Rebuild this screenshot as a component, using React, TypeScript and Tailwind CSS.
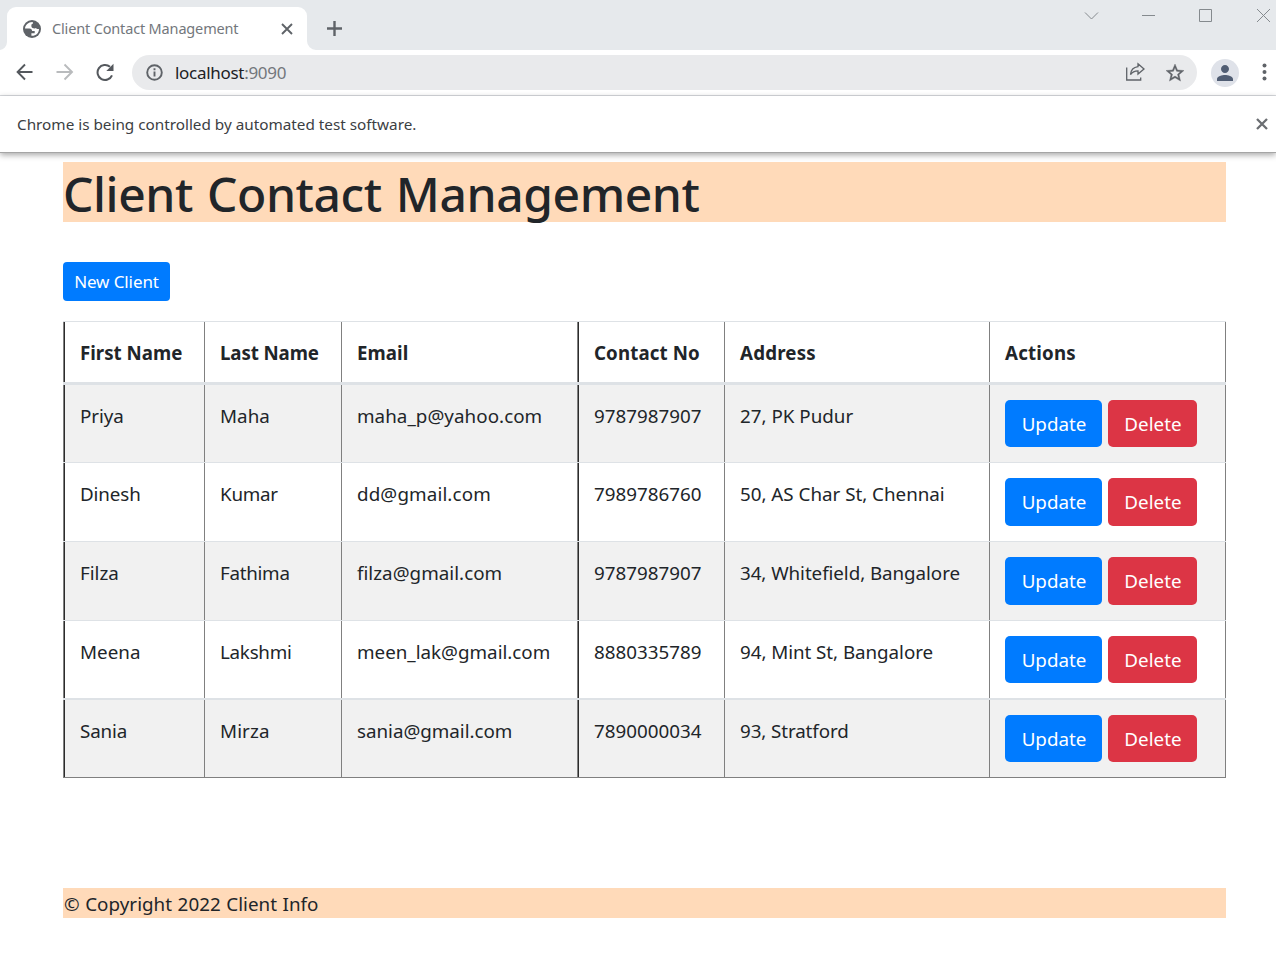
import type { ReactNode } from "react";

const columns = [
  { label: "First Name", track: "tracking-[0px]" },
  { label: "Last Name", track: "tracking-[-0.1px]" },
  { label: "Email", track: "tracking-[0.08px]" },
  { label: "Contact No", track: "tracking-[0.12px]" },
  { label: "Address", track: "tracking-[0.2px]" },
  { label: "Actions", track: "tracking-[0.2px]" },
];

type Cell = [text: string, track: string];

const clients: { row: string; button: string; cells: Cell[] }[] = [
  {
    row: "h-[78px] border-b bg-[#f1f1f1]",
    button: "h-[47px]",
    cells: [
      ["Priya", "tracking-[-0.1px]"],
      ["Maha", "tracking-[0.05px]"],
      ["maha_p@yahoo.com", "tracking-[0.05px]"],
      ["9787987907", "tracking-[0.02px]"],
      ["27, PK Pudur", "tracking-[0px]"],
    ],
  },
  {
    row: "h-[79px] border-b bg-white",
    button: "h-[48px]",
    cells: [
      ["Dinesh", "tracking-[-0.12px]"],
      ["Kumar", "tracking-[-0.25px]"],
      ["dd@gmail.com", "tracking-[0.13px]"],
      ["7989786760", "tracking-[0.02px]"],
      ["50, AS Char St, Chennai", "tracking-[-0.01px]"],
    ],
  },
  {
    row: "h-[79px] border-b bg-[#f1f1f1]",
    button: "h-[48px]",
    cells: [
      ["Filza", "tracking-[-0.02px]"],
      ["Fathima", "tracking-[-0.28px]"],
      ["filza@gmail.com", "tracking-[0.03px]"],
      ["9787987907", "tracking-[0.02px]"],
      ["34, Whitefield, Bangalore", "tracking-[-0.06px]"],
    ],
  },
  {
    row: "h-[79px] border-b-2 bg-white",
    button: "h-[47px]",
    cells: [
      ["Meena", "tracking-[0.03px]"],
      ["Lakshmi", "tracking-[-0.26px]"],
      ["meen_lak@gmail.com", "tracking-[0px]"],
      ["8880335789", "tracking-[0.02px]"],
      ["94, Mint St, Bangalore", "tracking-[-0.05px]"],
    ],
  },
  {
    row: "h-[77px] bg-[#f1f1f1]",
    button: "h-[47px]",
    cells: [
      ["Sania", "tracking-[-0.12px]"],
      ["Mirza", "tracking-[0.12px]"],
      ["sania@gmail.com", "tracking-[-0.02px]"],
      ["7890000034", "tracking-[0.02px]"],
      ["93, Stratford", "tracking-[-0.1px]"],
    ],
  },
];

const cellBorders = [
  "border-l border-r pl-4 shadow-[inset_1px_0_0_#2c2c2c]",
  "border-r pl-[15px]",
  "pl-[15px] shadow-[inset_-1px_0_0_#2c2c2c,inset_-2px_0_0_#808080]",
  "border-r pl-[15px]",
  "border-r pl-[15px]",
  "border-r pl-[15px]",
];

function Row({ className, children }: { className: string; children: ReactNode }) {
  return (
    <div
      className={`grid grid-cols-[142px_137px_237px_146px_265px_236px] border-[#dee2e6] ${className}`}
    >
      {children}
    </div>
  );
}

function TableCell({ index, className = "", children }: { index: number; className?: string; children: ReactNode }) {
  return (
    <div className={`whitespace-nowrap border-[#808080] pt-[15px] ${cellBorders[index]} ${className}`}>
      {children}
    </div>
  );
}

function TabStrip() {
  return (
    <div className="flex h-[50px] bg-[#e6e9ec] pl-[7px] pt-[7px]">
      <div className="relative flex h-[43px] w-[300px] items-center rounded-t-[9px] bg-white pl-4">
        <svg className="absolute -left-[8px] bottom-0 size-2" viewBox="0 0 8 8">
          <path d="M8 0v8H0a8 8 0 0 0 8-8z" fill="#fff" />
        </svg>
        <svg className="absolute -right-[9px] bottom-0 size-[9px]" viewBox="0 0 9 9">
          <path d="M0 0v9h9a9 9 0 0 1-9-9z" fill="#fff" />
        </svg>
        <svg className="size-[18px]" viewBox="0 0 18 18">
          <circle cx="9" cy="9" r="9" fill="#5f6368" />
          <path
            d="M9.800 2C5.500 1.800 2.200 5 2 8.600h4.500c1.600 0 2.600 1 2.600 2.400h2.600v2.200H8.400v2.600c4 .500 7.600-2.600 7.600-6.800h-1.500c-.7 0-1.100-.3-1.500-.9-.8 1-4.600.400-4.600-1.500V5.200c0-.900.500-1.300 1.400-1.400z"
            fill="#fff"
          />
        </svg>
        <span className="ml-[11px] w-[230px] whitespace-nowrap text-[14.5px] tracking-[-0.16px] text-[#73777c]">
          Client Contact Management
        </span>
        <svg className="absolute left-[274px] top-[16px] size-3" viewBox="0 0 12 12" stroke="#5f6368" strokeWidth="1.9">
          <path d="M1 1l10 10M11 1L1 11" />
        </svg>
      </div>
      <svg className="ml-[19px] mt-[13px] size-4" viewBox="0 0 16 16" stroke="#5f6368" strokeWidth="2.4">
        <path d="M8.500 1v15M1 8.500h15" />
      </svg>
      <div className="ml-auto flex h-[17px] items-center text-[#858a8e]">
        <svg className="mb-px h-[13px] w-[185px] overflow-visible" viewBox="0 0 185 13" fill="none" stroke="currentColor">
          <path d="M0 3.500l6.500 6.500L13 3.500M57 6.500h13M114.500.5h12v12h-12zM172 0l13 13M185 0l-13 13" />
        </svg>
        <div className="w-[6px]" />
      </div>
    </div>
  );
}

function Toolbar() {
  return (
    <div className="flex h-[46px] items-center border-b border-[#d9dbdf] bg-white">
      <svg className="mb-[2px] ml-[15px] h-[18px] w-[100px]" viewBox="0 0 100 18" fill="none" strokeWidth="1.9">
        <path d="M17.500 9H3M10 1.500L2.600 9L10 16.500" stroke="#54585d" />
        <path d="M41.500 9h15M49.500 1.500L57 9l-7.500 7.500" stroke="#b9bbbd" />
        <path d="M97 12.300A7.500 7.500 0 1 1 95 3.800" stroke="#54585d" strokeWidth="2" />
        <path d="M98.500.8v7.200h-7.200z" fill="#54585d" />
      </svg>
      <div className="ml-[17px] flex h-[35px] w-[1065px] items-center rounded-full bg-[#e9eaec] pl-[14px]">
        <svg className="size-[17px]" viewBox="0 0 17 17" fill="none" stroke="#5f6368" strokeWidth="1.9">
          <circle cx="8.500" cy="8.500" r="7.300" />
          <path d="M8.500 7.500v5M8.500 4.300v1.900" />
        </svg>
        <span className="ml-[12px] text-[17px] tracking-[-0.3px] text-[#202124]">
          localhost<span className="text-[#73777c]">:9090</span>
        </span>
        <svg className="mb-px ml-auto mr-px h-[20px] w-[20px]" viewBox="0 0 20 20" fill="none" stroke="#5f6368" strokeWidth="1.3">
          <path d="M1.700 5.500v12.500h14v-2.500" />
          <path d="M13 1.800l6 5.200-6 5v-3.200c-3.400 0-5.700 1-7.500 3.800.4-4.600 2.900-7.300 7.500-7.900z" />
        </svg>
        <svg className="ml-[20px] mr-[13px] size-[18px]" viewBox="2 2 20 20" fill="#5f6368" stroke="#5f6368" strokeWidth=".4">
          <path d="M22 9.240l-7.190-.620L12 2 9.190 8.630 2 9.240l5.460 4.730L5.820 21 12 17.270 18.180 21l-1.630-7.030L22 9.240zM12 15.400l-3.760 2.270 1-4.280-3.320-2.880 4.380-.380L12 6.100l1.710 4.040 4.380.380-3.320 2.880 1 4.280L12 15.400z" />
        </svg>
      </div>
      <div className="ml-[14px] flex size-7 items-center justify-center rounded-full bg-[#dfe2e9]">
        <svg className="size-4" viewBox="4 4 16 16" fill="#505d73">
          <path d="M12 12c2.210 0 4-1.790 4-4s-1.790-4-4-4-4 1.790-4 4 1.790 4 4 4zm0 2c-2.670 0-8 1.340-8 4v2h16v-2c0-2.660-5.330-4-8-4z" />
        </svg>
      </div>
      <svg className="mb-px ml-[23px] h-[18px] w-[5px]" viewBox="0 0 5 18" fill="#5f6368">
        <circle cx="2.500" cy="2.600" r="2" />
        <circle cx="2.500" cy="9" r="2" />
        <circle cx="2.500" cy="15.400" r="2" />
      </svg>
    </div>
  );
}

export default function App() {
  return (
    <div className="flex h-[961px] w-[1276px] flex-col overflow-hidden bg-white font-['Noto_Sans','Open_Sans',sans-serif] text-[#212529]">
      <TabStrip />
      <Toolbar />
      <div className="z-10 flex h-[57px] shrink-0 items-center justify-between border-b border-[#a5a5a5] bg-white pl-[17px] pr-2 shadow-[0_2px_6px_rgba(0,0,0,0.35)]">
        <span className="text-[15.3px] tracking-[-0.01px] text-[#3c4043]">
          Chrome is being controlled by automated test software.
        </span>
        <svg className="size-3" viewBox="0 0 12 12" stroke="#6b6e72" strokeWidth="2.300">
          <path d="M1 1l10 10M11 1L1 11" />
        </svg>
      </div>

      <main className="ml-[63px] mt-[9px] w-[1163px]">
        <h1 className="h-[60px] whitespace-nowrap bg-[#ffdab9] text-[48px] font-medium leading-[64px] tracking-[-0.42px] [word-spacing:2px]">
          Client Contact Management
        </h1>

        <button className="mt-10 flex h-[39px] w-[107px] items-center justify-center rounded-[4px] bg-[#007bff] text-[17px] tracking-[-0.1px] text-white">
          New Client
        </button>

        <div className="mt-5 border-b border-t border-b-[#808080] border-t-[#dee2e6] text-[18.8px] leading-[33px]">
          <Row className="h-[63px] border-b-[3px] bg-white text-[18.7px] leading-[32px]">
            {columns.map((column, i) => (
              <TableCell key={column.label} index={i} className={`font-bold ${column.track}`}>
                {column.label}
              </TableCell>
            ))}
          </Row>
          {clients.map((client) => (
            <Row key={client.cells[0][0]} className={client.row}>
              {client.cells.map(([text, track], i) => (
                <TableCell key={i} index={i} className={track}>
                  {text}
                </TableCell>
              ))}
              <TableCell index={5} className="flex items-start gap-[6px]">
                <button
                  className={`flex w-[97px] items-center justify-center rounded-[5px] bg-[#007bff] pl-px pt-px text-white ${client.button}`}
                >
                  Update
                </button>
                <button
                  className={`flex w-[89px] items-center justify-center rounded-[5px] bg-[#dc3545] pl-px pt-px tracking-[0.05px] text-white ${client.button}`}
                >
                  Delete
                </button>
              </TableCell>
            </Row>
          ))}
        </div>

        <footer className="mt-[110px] h-[30px] bg-[#ffdab9] pl-px text-[18.8px] leading-[33px] tracking-[0.04px] [word-spacing:0.6px]">
          © Copyright 2022 Client Info
        </footer>
      </main>
    </div>
  );
}
